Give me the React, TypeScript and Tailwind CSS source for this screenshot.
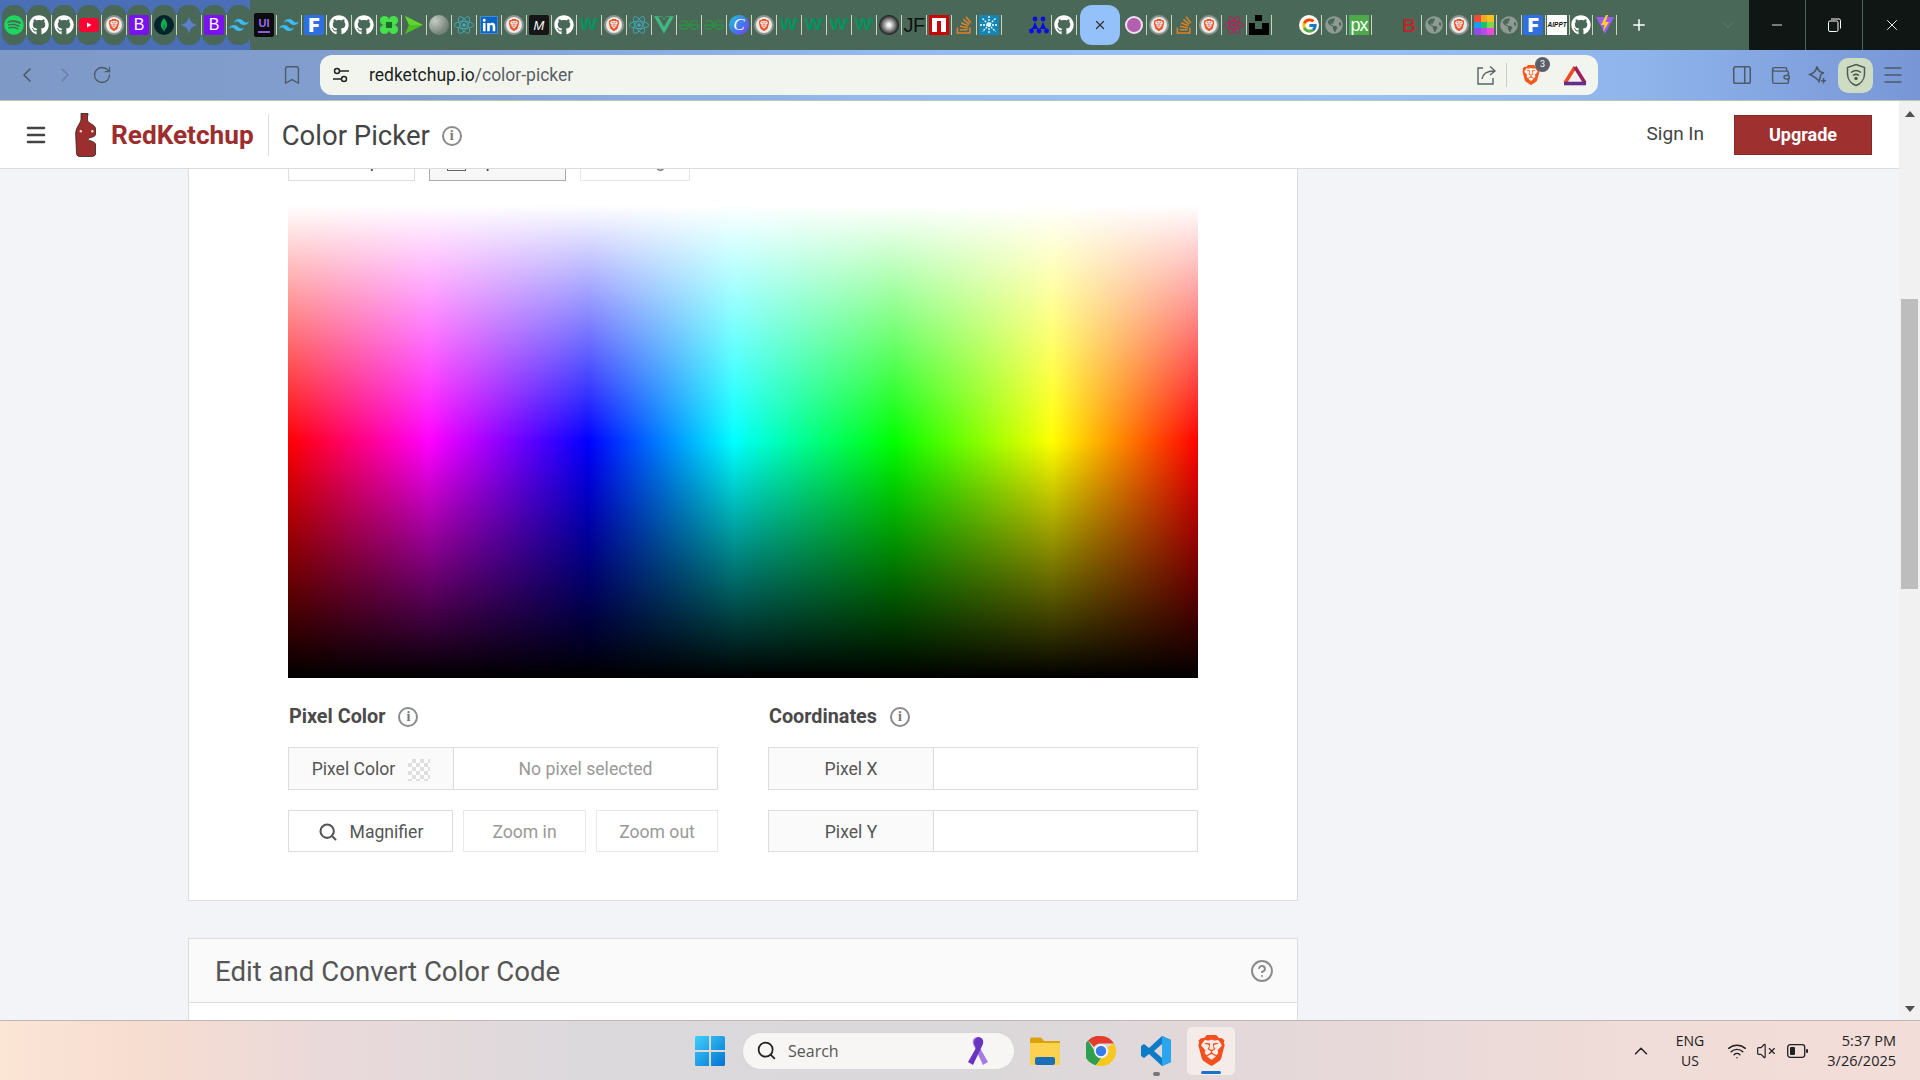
import { ChevronLeft, ChevronRight, RotateCw, Bookmark, PanelRight, Wallet, Menu, Search, Plus, ChevronUp, ChevronDown, Minus, X, CircleHelp, Wifi, VolumeX } from "lucide-react";
import { FaGithub, FaSpotify, FaLinkedin, FaStackOverflow, FaReact, FaGlobeAmericas } from "react-icons/fa";
import { SiBrave, SiMongodb, SiTailwindcss, SiGeeksforgeeks, SiVuedotjs } from "react-icons/si";
import { FcGoogle } from "react-icons/fc";

const Square = ({ className, children }: { className: string; children: React.ReactNode }) => (
  <div className={`w-5 h-5 flex items-center justify-center leading-none ${className}`}>{children}</div>
);

const BraveTab = () => (
  <div className="w-5 h-5 rounded-full border-2 border-[#8e9590] bg-[#e8ece8] flex items-center justify-center">
    <SiBrave size={12} color="#f0502a" />
  </div>
);

const BlueF = () => (
  <Square className="bg-[#2f6fe4] rounded-[2px] text-white font-black text-[19px] font-['Inter',sans-serif]">F</Square>
);

const W3 = () => (
  <div className="flex items-start font-['Liberation_Sans',sans-serif] font-bold text-[#04925f] leading-none">
    <span className="text-[22px] -mt-[5px]">w</span>
    <span className="text-[6px] -ml-[2px]">3</span>
  </div>
);

const tabIcon = (name: string) => {
  switch (name) {
    case "spotify": return <FaSpotify size={20} color="#1ed760" />;
    case "github": return <FaGithub size={20} color="#ffffff" />;
    case "youtube":
      return (
        <svg width="20" height="14" viewBox="0 0 20 14"><rect width="20" height="14" rx="3.500" fill="#ff0033" /><path d="M8 4.500 12.500 7 8 9.500Z" fill="#fff" /></svg>
      );
    case "brave": return <BraveTab />;
    case "bootstrap": return <Square className="bg-[#7a12f0] rounded-[2px] text-white text-[16px] font-['Liberation_Sans',sans-serif]">B</Square>;
    case "mongo": return <div className="w-5 h-5 rounded-full bg-[#04242c] flex items-center justify-center"><SiMongodb size={14} color="#13aa52" /></div>;
    case "gemini":
      return (
        <svg width="20" height="20" viewBox="0 0 20 20"><path d="M10 1C10.600 6 14 9.400 19 10 14 10.600 10.600 14 10 19 9.400 14 6 10.600 1 10 6 9.400 9.400 6 10 1Z" fill="#5b7fc8" /></svg>
      );
    case "tailwind": return <SiTailwindcss size={20} color="#38bdf8" />;
    case "ui":
      return (
        <div className="w-5 h-6 bg-[#0c0c10] rounded-[2px] flex flex-col items-center justify-center text-[#9a6cf0] text-[11px] font-bold leading-none font-['Liberation_Sans',sans-serif]">
          UI
          <div className="w-3 h-[2px] bg-[#8a5ce0] mt-[2px]" />
        </div>
      );
    case "f": return <BlueF />;
    case "clover":
      return (
        <svg width="20" height="20" viewBox="0 0 20 20" fill="#46e04a"><circle cx="5.500" cy="5.500" r="4.600" /><circle cx="14.500" cy="5.500" r="4.600" /><circle cx="5.500" cy="14.500" r="4.600" /><circle cx="14.500" cy="14.500" r="4.600" /><rect x="7" y="7" width="6" height="6" fill="#1d6b2c" /></svg>
      );
    case "arrow":
      return (
        <svg width="20" height="20" viewBox="0 0 20 20"><path d="M1 1 19 10 1 19 5 10Z" fill="#4cc020" /><path d="M1 1 19 10 H5Z" fill="#62d430" /></svg>
      );
    case "ball": return <div className="w-5 h-5 rounded-full bg-[radial-gradient(circle_at_30%_30%,#c5cdc5,#7e8a80_60%,#5a6a5e)]" />;
    case "react": return <FaReact size={20} color="#41a8b8" />;
    case "linkedin": return <div className="w-[18px] h-[18px] bg-white rounded-[2px] flex items-center justify-center"><FaLinkedin size={20} color="#0a66c2" /></div>;
    case "m": return <Square className="bg-[#161616] rounded-[2px] text-white italic text-[13px] font-['Liberation_Sans',sans-serif]">M</Square>;
    case "w3": return <W3 />;
    case "vue": return <SiVuedotjs size={20} color="#41b883" />;
    case "gfg": return <SiGeeksforgeeks size={20} color="#2f8d46" />;
    case "canva": return <div className="w-5 h-5 rounded-full bg-[linear-gradient(135deg,#1fc8d8,#4a6ff0_60%,#7a3fe0)] text-white italic text-[17px] leading-[20px] text-center font-['Liberation_Serif',serif]">C</div>;
    case "disc": return <div className="w-5 h-5 rounded-full bg-[radial-gradient(circle,#f5f5f5_10%,#777_45%,#111_72%,#bbb_100%)]" />;
    case "jf": return <span className="text-[#111] text-[20px] font-light leading-none tracking-tight font-['Liberation_Sans',sans-serif]">JF</span>;
    case "npm":
      return (
        <svg width="20" height="20" viewBox="0 0 20 20"><rect width="20" height="20" fill="#cb0606" /><rect x="3" y="3" width="14" height="14" fill="#fff" /><rect x="8" y="6" width="4" height="11" fill="#cb0606" /></svg>
      );
    case "stack": return <FaStackOverflow size={20} color="#d9822b" />;
    case "burst":
      return (
        <svg width="20" height="20" viewBox="0 0 20 20"><rect width="20" height="20" fill="#1286b4" /><g stroke="#fff" strokeWidth="1.300" strokeDasharray="2 1"><path d="M10 1V19M1 10H19M3.500 3.500 16.500 16.500M16.500 3.500 3.500 16.500" /></g><circle cx="10" cy="10" r="2" fill="#dff" /></svg>
      );
    case "people":
      return (
        <svg width="20" height="18" viewBox="0 0 20 18" fill="#0a0ae8"><circle cx="6" cy="3" r="2.400" /><circle cx="14" cy="3" r="2.400" /><path d="M6 6 3 13H9ZM14 6 11 13H17Z" /><circle cx="2.500" cy="15" r="2.400" /><circle cx="10" cy="15" r="2.400" /><circle cx="17.500" cy="15" r="2.400" /></svg>
      );
    case "pink": return <div className="w-[18px] h-[18px] rounded-full bg-[#b45fae] border-2 border-[#f3e0f0]" />;
    case "atom": return <FaReact size={20} color="#c2185b" />;
    case "uni":
      return (
        <svg width="20" height="20" viewBox="0 0 20 20" fill="#000"><rect x="6" y="0" width="7" height="6" /><path d="M0 8H6V14H13V8H20V20H0Z" /></svg>
      );
    case "google": return <div className="w-5 h-5 rounded-full bg-white flex items-center justify-center"><FcGoogle size={17} /></div>;
    case "globe": return <FaGlobeAmericas size={18} color="#8f9a94" />;
    case "px": return <Square className="bg-[#4daa4a] text-white text-[18px] font-['Liberation_Sans',sans-serif] tracking-tighter">px</Square>;
    case "bred": return <span className="text-[#b52a2a] text-[19px] font-bold leading-none font-['Liberation_Sans',sans-serif]">B</span>;
    case "grid":
      return (
        <div className="w-5 h-5 grid grid-cols-3 grid-rows-3">
          <div className="bg-[#f14b3f]" /><div className="bg-[#f5a623]" /><div className="bg-[#f7c21d]" />
          <div className="bg-[#1f9be8]" /><div className="bg-[#18c26e]" /><div className="bg-[#7fd64c]" />
          <div className="bg-[#8e4de8]" /><div className="bg-[#b84be8]" /><div className="bg-[#ee4bd8]" />
        </div>
      );
    case "aippt": return <Square className="bg-white text-[#111] text-[6.5px] font-bold italic font-['Liberation_Sans',sans-serif]">AIPPT</Square>;
    case "vite":
      return (
        <svg width="20" height="20" viewBox="0 0 20 20"><path d="M1 2 19 2 10 19Z" fill="#9b5cf6" /><path d="M11 0 6 10H9.500L8 17 14 7H10.500L13 0Z" fill="#ffd028" /></svg>
      );
    default: return null;
  }
};

const firstGroup = ["spotify", "github", "github", "youtube", "brave", "bootstrap", "mongo", "gemini", "bootstrap", "tailwind"];
const secondGroup = ["ui", "tailwind", "f", "github", "github", "clover", "arrow", "ball", "react", "linkedin", "brave", "m", "github", "w3", "brave", "react", "vue", "gfg", "gfg", "canva", "brave", "w3", "w3", "w3", "w3", "disc", "jf", "npm", "stack", "burst", "", "people", "github"];
const thirdGroup = ["pink", "brave", "stack", "brave", "atom", "uni", "", "google", "globe", "px", "", "bred", "globe", "brave", "grid", "globe", "f", "aippt", "github", "vite"];

const Sep = () => <div className="w-px h-5 bg-[#c9d3bd] shrink-0" />;

const TabBar = () => (
  <div className="h-[50px] shrink-0 bg-[#4a6858] flex items-center">
    <div className="h-full w-[250px] shrink-0 bg-[#4b6fb6] flex items-center pl-[2px]">
      {firstGroup.map((name, i) => (
        <div key={i} className="w-[25px] h-full shrink-0 flex items-center relative">
          <div className="w-[24px] h-10 bg-[#4a6858] rounded-[11px] flex items-center justify-center">{tabIcon(name)}</div>
          {i < 9 && <div className="absolute right-0 top-[15px]"><Sep /></div>}
        </div>
      ))}
    </div>
    <div className="flex items-center shrink-0 ml-[2px]">
      {secondGroup.map((name, i) => (
        <div key={i} className="w-[25px] h-[50px] shrink-0 flex items-center">
          <div className="flex-1 flex justify-center">{tabIcon(name)}</div>
          {name !== "" && <Sep />}
        </div>
      ))}
    </div>
    <div className="w-[45px] shrink-0 flex justify-center">
      <div className="w-[40px] h-10 rounded-xl bg-[#95c1fb] flex items-center justify-center">
        <X size={14} color="#333" strokeWidth={2.2} />
      </div>
    </div>
    <div className="flex items-center shrink-0">
      {thirdGroup.map((name, i) => (
        <div key={i} className={`${i < 16 ? "w-[25px]" : "w-[23.8px]"} h-[50px] shrink-0 flex items-center`}>
          <div className="flex-1 flex justify-center">{tabIcon(name)}</div>
          {name !== "" && <Sep />}
        </div>
      ))}
    </div>
    <Plus size={18} color="#fff" className="ml-[13px] shrink-0" />
    <ChevronDown size={18} color="#567264" className="ml-[71px] shrink-0" />
    <div className="ml-auto h-full w-[171px] bg-[#0f1613] flex text-white">
      <div className="w-[56px] flex items-center justify-center"><Minus size={16} strokeWidth={1.3} /></div>
      <div className="w-[58px] border-x border-[#4a6858] flex items-center justify-center">
        <svg width="13" height="14" viewBox="0 0 13 14" fill="none" stroke="#fff" strokeWidth="1"><rect x="0.5" y="3" width="9.5" height="10.5" rx="1.5" /><path d="M3 1H11A1.5 1.5 0 0 1 12.5 2.5V10.500" /></svg>
      </div>
      <div className="flex-1 flex items-center justify-center"><X size={18} strokeWidth={1.2} /></div>
    </div>
  </div>
);

const Toolbar = () => (
  <div className="h-[51px] shrink-0 border-b border-[#b7c9a8] bg-[linear-gradient(90deg,#7e99c6_0%,#819fd0_20%,#96bdf3_50%,#98c0f6_70%,#8fb5ec_85%,#7896d6_100%)] flex items-center text-[#4e5a66]">
    <div className="w-[320px] shrink-0 flex items-center">
      <ChevronLeft size={24} strokeWidth={1.6} className="ml-[15px]" />
      <ChevronRight size={24} strokeWidth={1.6} className="ml-[14px] text-[#6a80a8]" />
      <RotateCw size={20} strokeWidth={1.6} className="ml-[15px]" />
      <Bookmark size={22} strokeWidth={1.5} className="ml-[169px]" />
    </div>
    <div className="w-[1278px] h-10 shrink-0 rounded-xl bg-[#f2f5ee] flex items-center">
      <svg width="18" height="18" viewBox="0 0 18 18" fill="none" stroke="#222" strokeWidth="1.5" className="ml-[12px]">
        <circle cx="5" cy="5" r="2.5" /><path d="M8 5H17M1 13H9" /><circle cx="12" cy="13" r="2.5" />
      </svg>
      <span className="ml-[19px] mt-[1px] text-[17.5px] text-[#1d1f22] font-['Roboto',sans-serif]">redketchup.io<span className="text-[#5a5f63]">/color-picker</span></span>
      <svg width="22" height="22" viewBox="0 0 22 22" fill="none" stroke="#5a6268" strokeWidth="1.4" className="ml-auto">
        <path d="M8 4H3V20H18V14" /><path d="M7 15C8 9 12 7 19 7M15 2.500 20 7 15 11" />
      </svg>
      <div className="w-px h-6 bg-[#c8ccc6] ml-[9px]" />
      <div className="relative ml-[14px] w-[20px] flex justify-center">
        <SiBrave size={24} color="#f55a1e" />
        <div className="absolute -top-[6px] -right-[9px] w-[15px] h-[15px] rounded-full bg-[#5a5f6a] text-white text-[9px] leading-[15px] text-center font-['Roboto',sans-serif]">3</div>
      </div>
      <svg width="24" height="22" viewBox="0 0 24 22" fill="none" strokeWidth="3.6" className="ml-[22px] mr-[11px]">
        <path d="M12 3 2 19" stroke="#f04a24" /><path d="M12 3 22 19" stroke="#9c1f5f" /><path d="M1 19.500H23" stroke="#662d91" />
      </svg>
    </div>
    <PanelRight size={22} strokeWidth={1.7} className="ml-[133px] shrink-0" />
    <Wallet size={21} strokeWidth={1.7} className="ml-[17px] shrink-0" />
    <svg width="20" height="20" viewBox="0 0 20 20" fill="none" stroke="currentColor" strokeWidth="1.6" className="ml-[17px] shrink-0">
      <path d="M9 1.500C9.700 5.500 11.500 7.300 16 8 11.500 8.700 13 11 11 16.500 9.500 13.500 7 12 2 9.500 6.500 8 8.300 5.500 9 1.500Z" />
      <path d="M15.500 13V18.500M13 15.700H18" />
    </svg>
    <div className="ml-[10px] w-[35px] h-[35px] rounded-[10px] bg-[#cfdcc4] flex items-center justify-center shrink-0">
      <svg width="20" height="24" viewBox="0 0 20 24" fill="none" stroke="#4e5a50" strokeWidth="1.500">
        <path d="M10 1.500 18.500 4.500V11C18.500 17 14 21 10 22.500 6 21 1.500 17 1.500 11V4.500Z" />
        <path d="M5 9.500C8 7 12 7 15 9.500M7 12.500C9 11 11 11 13 12.500" />
        <circle cx="10" cy="15.500" r="1" fill="#4e5a50" />
      </svg>
    </div>
    <Menu size={24} strokeWidth={1.5} className="ml-[8px] shrink-0" />
  </div>
);

const Bottle = () => (
  <svg width="22" height="44" viewBox="0 0 22 44" className="shrink-0">
    <path d="M6 .5H13V2.500H12.500V7C13 11 20.500 11 20.500 16V21C20.500 24 17 24 14 25 13 25.500 13 27 14 27.500 17 28 19.500 29 20.500 31V41C20.500 43 18 43.500 16 43.500H6C3 43.500 1.500 43 1.500 40L.7 22C.2 15 5 11 6 7V2.500Z" fill="#9d2e2e" stroke="#2a2222" strokeWidth=".8" />
    <circle cx="5.800" cy="18.300" r="1.200" fill="#e8e0d8" /><circle cx="17.300" cy="18.300" r="1.200" fill="#e8e0d8" />
  </svg>
);

const InfoDot = ({ className = "" }: { className?: string }) => (
  <div className={`w-5 h-5 rounded-full border-2 border-[#8b8b8b] flex items-center justify-center text-[#777] text-[14px] font-bold leading-none font-['Liberation_Serif',serif] shrink-0 ${className}`}>i</div>
);

const PageHeader = () => (
  <header className="h-[68px] shrink-0 bg-white border-b border-[#dcdcdf] flex items-center text-[#444] font-['Roboto',sans-serif] relative z-10">
    <Menu size={24} strokeWidth={2.6} className="ml-[24px] mt-[1px] shrink-0" />
    <div className="ml-[27px]"><Bottle /></div>
    <span className="ml-[14px] mt-[2px] text-[26.2px] font-bold text-[#9d2e2e]">RedKetchup</span>
    <div className="w-px h-[42px] bg-[#dcdcdf] ml-[14px]" />
    <span className="ml-[13px] mt-[2px] text-[27.5px]">Color Picker</span>
    <InfoDot className="ml-[12px] mt-[2px]" />
    <span className="ml-auto text-[19px]">Sign In</span>
    <div className="ml-[30px] mr-[27px] w-[138px] h-10 bg-[#9e3030] border border-[#8a2828] text-white text-[18px] font-bold flex items-center justify-center">Upgrade</div>
  </header>
);

const Cell = ({ className = "", children }: { className?: string; children?: React.ReactNode }) => (
  <div className={`flex items-center justify-center text-[17.6px] pt-[2px] ${className}`}>{children}</div>
);

const Picker = () => (
  <div className="w-[1110px] bg-white border-x border-b border-[#dcdcdf] pl-[99px] pr-[99px] pb-[48px]">
    <div className="flex gap-[14px] h-[42px] text-[18px] text-[#444]">
      <div className="w-[127px] border border-[#ddd] flex items-center justify-center pr-[26px]">Color Map</div>
      <div className="w-[137px] border border-[#aaa] bg-[#f7f7f7] flex items-center justify-center gap-[8px] pr-[18px]">
        <div className="w-[19px] h-[22px] border border-[#666]" />
        Upload
      </div>
      <div className="w-[110px] border border-[#e6e6e6] text-[#777] flex items-center justify-center pl-[30px]">Image</div>
    </div>
    <div className="h-[473px] mt-[24px] bg-[linear-gradient(to_bottom,#ffffff_0%,#ffffff00_50%,#00000000_50%,#000000_100%),linear-gradient(to_right,#ff0000_0%,#ff00ff_15.5%,#0000ff_33%,#00ffff_49%,#00ff00_66.6%,#ffff00_84%,#ff0000_100%)]" />
    <div className="mt-[24px] grid grid-cols-[430px_430px] gap-x-[50px] text-[#555]">
      <div>
        <div className="h-[28px] flex items-center gap-[13px] text-[19.8px] font-bold text-[#4a4a4a] pl-px pt-px">
          Pixel Color
          <InfoDot />
        </div>
        <div className="mt-[17px] h-[43px] flex border border-[#ddd]">
          <Cell className="w-[165px] bg-[#fafafa] border-r border-[#ddd] gap-[13px]">
            Pixel Color
            <div className="w-[22px] h-[22px] bg-[repeating-conic-gradient(#dedede_0_25%,#ffffff_0_50%)] bg-[length:8px_8px]" />
          </Cell>
          <Cell className="flex-1 text-[#999]">No pixel selected</Cell>
        </div>
        <div className="mt-[20px] h-[42px] flex gap-[10px]">
          <Cell className="w-[165px] border border-[#ddd] gap-[12px]">
            <Search size={20} strokeWidth={2.5} />
            Magnifier
          </Cell>
          <Cell className="w-[123px] border border-[#e8e8e8] text-[#999]">Zoom in</Cell>
          <Cell className="w-[122px] border border-[#e8e8e8] text-[#999]">Zoom out</Cell>
        </div>
      </div>
      <div>
        <div className="h-[28px] flex items-center gap-[13px] text-[19.8px] font-bold text-[#4a4a4a] pl-px pt-px">
          Coordinates
          <InfoDot />
        </div>
        <div className="mt-[17px] h-[43px] flex border border-[#ddd]">
          <Cell className="w-[165px] bg-[#fafafa] border-r border-[#ddd]">Pixel X</Cell>
        </div>
        <div className="mt-[20px] h-[42px] flex border border-[#ddd]">
          <Cell className="w-[165px] bg-[#fafafa] border-r border-[#ddd]">Pixel Y</Cell>
        </div>
      </div>
    </div>
  </div>
);

const ConvertCard = () => (
  <div className="w-[1110px] mt-[37px] bg-white border border-[#dcdcdf] h-[200px]">
    <div className="h-[64px] bg-[#fafafa] border-b border-[#dcdcdf] flex items-center justify-between pl-[26px] pr-[23px]">
      <span className="text-[27.6px] text-[#555] pt-[2px]">Edit and Convert Color Code</span>
      <CircleHelp size={24} color="#8b8b8b" strokeWidth={2} />
    </div>
  </div>
);

const Scrollbar = () => (
  <div className="w-[21px] shrink-0 bg-[#f1f1f1] flex flex-col items-center">
    <svg width="10" height="6" viewBox="0 0 10 6" fill="#505050" className="mt-[10px]"><path d="M5 0 10 6H0Z" /></svg>
    <div className="w-[17px] h-[290px] bg-[#bdbdbd] mt-[182px]" />
    <svg width="10" height="6" viewBox="0 0 10 6" fill="#505050" className="mt-auto mb-[8px]"><path d="M0 0H10L5 6Z" /></svg>
  </div>
);

const WinLogo = () => (
  <svg width="30" height="30" viewBox="0 0 30 30">
    <defs>
      <linearGradient id="winGrad" x1="0" y1="0" x2="1" y2="1"><stop offset="0" stopColor="#3fd0fa" /><stop offset="1" stopColor="#0472d2" /></linearGradient>
    </defs>
    <path d="M0 1.500A1.500 1.500 0 0 1 1.500 0H14V14H0ZM16 0H28.500A1.500 1.500 0 0 1 30 1.500V14H16ZM0 16H14V30H1.500A1.500 1.500 0 0 1 0 28.500ZM16 16H30V28.500A1.500 1.500 0 0 1 28.500 30H16Z" fill="url(#winGrad)" />
  </svg>
);

const Taskbar = () => (
  <div className="h-[60px] shrink-0 border-t border-[#bdb8b8] bg-[linear-gradient(90deg,#fbe5d5_0%,#f7ddd0_7%,#ead9da_17%,#dcd9dc_30%,#dad8da_50%,#e4d8da_65%,#f0dcd8_85%,#f3ddd8_100%)] flex items-center font-['Open_Sans',sans-serif] text-[#222]">
    <div className="ml-[695px]"><WinLogo /></div>
    <div className="ml-[17px] w-[273px] h-[38px] rounded-full bg-[#f8f6f5] border border-[#d8d6d6] flex items-center">
      <Search size={21} strokeWidth={2} className="ml-[13px]" />
      <span className="ml-[11px] text-[16px] text-[#555]">Search</span>
      <svg width="22" height="30" viewBox="0 0 22 30" className="ml-auto mr-[25px]">
        <path d="M11 1C7 1 5 4 6 8L16 29 21 26 13 12C15 9 17 4 11 1Z" fill="#a67be8" />
        <path d="M11 1C15 1 17 4 16 8L6 29 1 26 9 12C7 9 5 4 11 1Z" fill="#6a34c0" />
      </svg>
    </div>
    <svg width="30" height="28" viewBox="0 0 30 28" className="ml-[15px]">
      <path d="M0 2A1.500 1.500 0 0 1 1.500 .5H11L14 4H30V8H0Z" fill="#dca20a" />
      <path d="M0 6H30V28H0Z" fill="#fdd250" />
      <rect x="5" y="20" width="20" height="8" rx="2" fill="#1b6fb8" />
    </svg>
    <svg width="30" height="30" viewBox="0 0 30 30" className="ml-[26px]">
      <path d="M15 0A15 15 0 0 1 28 7.500H15A7.500 7.500 0 0 0 8 11L2 4.500A15 15 0 0 1 15 0Z" fill="#e33b2e" />
      <path d="M2 4.500 8.500 15A7.500 7.500 0 0 0 15 22.500L10 29.200A15 15 0 0 1 2 4.500Z" fill="#2e9e4f" />
      <path d="M28 7.500A15 15 0 0 1 10 29.200L15 22.500A7.500 7.500 0 0 0 21.500 11Z" fill="#f8c91c" />
      <circle cx="15" cy="15" r="6" fill="#3a7bea" stroke="#fff" strokeWidth="1.500" />
    </svg>
    <div className="ml-[25px] relative">
      <svg width="30" height="30" viewBox="0 0 30 30">
        <path d="M21 0 30 4V26L21 30 8 18 3 22 0 20V10L3 8 8 12ZM21 8 13 15 21 22Z" fill="#0d7cc8" />
        <path d="M21 0 30 4V26L21 30Z" fill="#2aa5ee" />
      </svg>
      <div className="absolute -bottom-[10px] left-[12px] w-[7px] h-[4px] rounded-full bg-[#777]" />
    </div>
    <div className="ml-[16px] w-[48px] h-[48px] rounded-[5px] bg-[#f5ece9] flex flex-col items-center justify-center relative">
      <SiBrave size={31} color="#f4501e" />
      <div className="absolute bottom-[1px] w-[20px] h-[3px] rounded-full bg-[#1a73c8]" />
    </div>
    <ChevronUp size={22} strokeWidth={1.6} className="ml-[395px]" />
    <div className="ml-[18px] w-[40px] text-center text-[14px] leading-[20px]">
      <div>ENG</div>
      <div>US</div>
    </div>
    <Wifi size={20} strokeWidth={1.7} className="ml-[17px]" />
    <VolumeX size={20} strokeWidth={1.4} className="ml-[9px]" />
    <svg width="21" height="14" viewBox="0 0 21 14" fill="none" className="ml-[11px]">
      <rect x=".7" y=".7" width="17" height="12.600" rx="2.500" stroke="#222" strokeWidth="1.300" />
      <rect x="3" y="3" width="5" height="8" rx="1" fill="#222" />
      <rect x="19" y="5" width="2" height="4" rx="1" fill="#222" />
    </svg>
    <div className="ml-auto mr-[24px] text-right text-[14.5px] leading-[20px]">
      <div>5:37 PM</div>
      <div>3/26/2025</div>
    </div>
  </div>
);

export default function App() {
  return (
    <div className="w-[1920px] h-[1080px] overflow-hidden flex flex-col bg-white">
      <TabBar />
      <Toolbar />
      <div className="flex-1 min-h-0 flex">
        <div className="flex-1 min-w-0 flex flex-col overflow-hidden">
          <PageHeader />
          <div className="flex-1 min-h-0 overflow-hidden bg-[#f3f4f8] font-['Roboto',sans-serif]">
            <div className="pl-[188px] -mt-[30px]">
              <Picker />
              <ConvertCard />
            </div>
          </div>
        </div>
        <Scrollbar />
      </div>
      <Taskbar />
    </div>
  );
}
